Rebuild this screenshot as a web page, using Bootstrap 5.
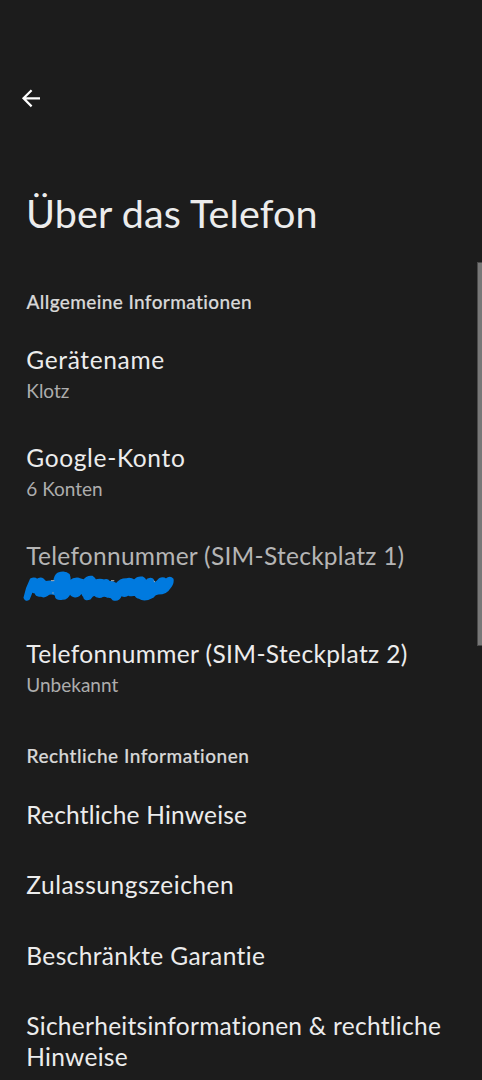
<!DOCTYPE html>
<html lang="de" data-bs-theme="dark">
<head>
<meta charset="utf-8">
<meta name="viewport" content="width=device-width, initial-scale=1">
<title>Über das Telefon</title>
<link href="https://cdn.jsdelivr.net/npm/bootstrap@5.3.0/dist/css/bootstrap.min.css" rel="stylesheet">
<style>
body{background:#1c1c1c;color:#ececec;font-family:Lato,"Open Sans",sans-serif;font-variant-ligatures:none;height:1080px;overflow:hidden}
.top-area{height:261.5px;padding:88px 19.5px 0}
.back-btn{width:21px;height:21px;line-height:0}
.page-title{font-size:39.5px;line-height:48px;margin:80px 0 0 6.5px;font-weight:400;letter-spacing:.1px;color:#ececec}
.section-label{font-size:19px;line-height:24px;padding:28.3px 26.5px 10.7px;font-weight:500;margin:0;color:#d8d8d8;letter-spacing:.38px;-webkit-text-stroke:.2px #d8d8d8}
.section-label.wide{letter-spacing:.53px;padding-top:27.7px}
.pref{padding:19.75px 26.3px;color:inherit}
.pref-title{font-size:24.5px;line-height:31px}
.pref-sub{font-size:19px;line-height:24px;height:24px;margin-top:3.5px;color:#adadad}
.pref.muted .pref-title{color:#b5b5b5}
.track-1{letter-spacing:.2px}
.track-2{letter-spacing:.27px}
.track-3{letter-spacing:.37px}
.track-4{letter-spacing:.5px}
.track-5{letter-spacing:.65px}
.scroll-thumb{right:0;top:262px;width:5px;height:383.5px;background:#777;border:solid #4a4a4a;border-width:1px 0 1px 1px}
.scribble{flex:none;margin:-5px 0 0 -4.3px}
</style>
</head>
<body>
<header class="top-area">
<a class="back-btn d-block text-reset" href="#" aria-label="Zurück"><svg width="21" height="21" viewBox="0 0 21 21" fill="none" stroke="#fff" stroke-width="2.2"><path d="M20 10.3H3.8M11.6 2.2L3.5 10.3l8.1 8.1"/></svg></a>
<h1 class="page-title">Über das Telefon</h1>
</header>
<main>
<h2 class="section-label">Allgemeine Informationen</h2>
<div class="list-unstyled">
<div class="pref"><div class="pref-title track-5">Gerätename</div><div class="pref-sub">Klotz</div></div>
<div class="pref"><div class="pref-title track-5">Google-Konto</div><div class="pref-sub">6 Konten</div></div>
<div class="pref muted"><div class="pref-title track-2">Telefonnummer (SIM-Steckplatz 1)</div>
<div class="pref-sub d-flex"><svg class="scribble" width="154" height="34" viewBox="22 570 154 34"><g transform="translate(10 565) scale(.33333)">
<path fill="#007adf" stroke="#007adf" stroke-width="5" stroke-linejoin="round" d="M43 98Q48 70 62 43Q73 37 81 44Q91 36 100 43Q105 52 113 50Q124 47 133 53Q132 33 145 25Q165 17 177 29Q181 40 178 49Q193 38 207 41Q216 44 222 46Q232 32 247 35Q255 40 256 46Q270 41 282 46Q292 42 298 50Q309 50 319 57Q331 41 350 42Q362 39 373 46Q382 35 397 37Q408 43 406 50Q417 37 428 43Q433 47 430 56Q443 50 449 41Q460 37 468 43Q480 33 488 42Q491 56 478 70Q470 86 445 86Q435 86 430 95Q404 110 388 99Q379 98 376 90Q362 93 355 89Q345 97 334 90Q326 109 310 104Q303 94 293 96Q282 90 273 96Q260 98 253 90Q247 91 240 101Q224 108 221 93Q217 91 216 79Q207 98 192 94Q181 92 181 82Q172 103 157 102Q136 105 137 90Q121 82 111 91Q101 98 92 92Q79 95 76 83Q70 84 66 78Q62 91 57 102Q47 109 43 98Z"/>
<path stroke="#b5b5b5" stroke-width="3" d="M123 47h10M127 84h4M303 47h10M431 48l4 3"/></g></svg></div></div>
<div class="pref"><div class="pref-title track-3">Telefonnummer (SIM-Steckplatz 2)</div><div class="pref-sub">Unbekannt</div></div>
</div>
<h2 class="section-label wide">Rechtliche Informationen</h2>
<div class="list-unstyled">
<div class="pref"><div class="pref-title track-1">Rechtliche Hinweise</div></div>
<div class="pref"><div class="pref-title track-4">Zulassungszeichen</div></div>
<div class="pref"><div class="pref-title track-3">Beschränkte Garantie</div></div>
<div class="pref"><div class="pref-title track-2">Sicherheitsinformationen &amp; rechtliche Hinweise</div></div>
</div>
</main>
<div class="scroll-thumb position-fixed"></div>
<script src="https://cdn.jsdelivr.net/npm/bootstrap@5.3.0/dist/js/bootstrap.bundle.min.js"></script>
</body>
</html>
